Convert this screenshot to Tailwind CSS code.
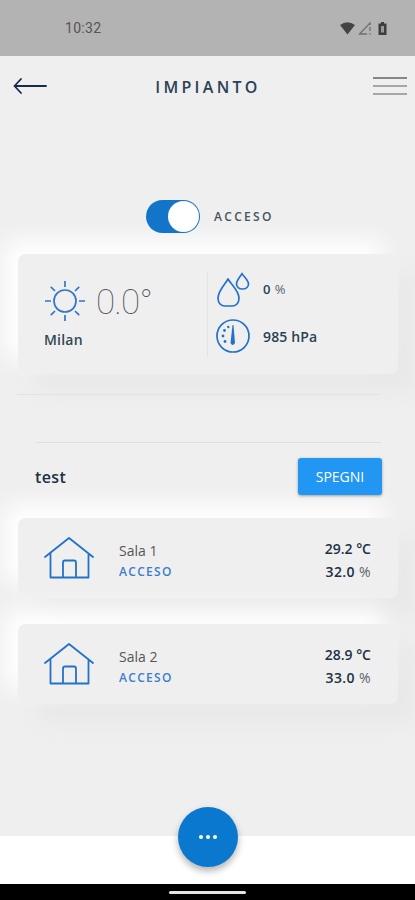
<!DOCTYPE html>
<html lang="it">
<head>
  <meta charset="UTF-8" />
  <meta name="viewport" content="width=device-width, initial-scale=1.0" />
  <title>Impianto</title>
  <script src="https://cdn.jsdelivr.net/npm/@tailwindcss/browser@4"></script>
</head>
<body class="bg-white font-['Open_Sans','Noto_Sans',sans-serif] text-[#1d3145]">
  <div class="relative w-[415px] h-[900px] overflow-hidden flex flex-col">

    <!-- STATUS BAR -->
    <div class="h-14 shrink-0 bg-[#b3b3b3] flex items-center justify-between pl-[65px] pr-[28px] text-[#555]">
      <span class="font-[Roboto] text-sm leading-none tracking-[0.3px]">10:32</span>
      <div class="flex items-center text-[#444]">
        <svg class="w-[15px] h-[13px]" viewBox="0 0 15 13"><path d="M0 3 Q7.5 -2.500 15 3 L7.500 12.500 Z" fill="currentColor"/></svg>
        <svg class="w-[13px] h-[13px] ml-[3px]" viewBox="0 0 13 13" fill="none" stroke="#707070" stroke-width="1.300"><path d="M9 12 H1.500 L12 1 V3"/><path d="M12 5 V9 M12 11 V12.500"/></svg>
        <svg class="w-[9px] h-[13px] ml-[7px]" viewBox="0 0 9 13"><path d="M3 0 H6 V1.500 H8.500 V13 H.5 V1.500 H3 Z" fill="#3e3e3e"/><path d="M3 4 H6 V10.500 H3 Z" fill="#999"/></svg>
      </div>
    </div>

    <main class="h-[780px] shrink-0 bg-[#efefef] flex flex-col">
      <!-- HEADER -->
      <header class="h-[60px] flex items-center justify-between pl-[13px] pr-2">
        <svg class="w-[34px] h-[18px]" viewBox="0 0 34 18" fill="none" stroke="#152b48" stroke-width="1.800" stroke-linecap="round" stroke-linejoin="round"><path d="M33 9 H1.500 M8 2 L1.500 9 L8 16"/></svg>
        <h1 class="text-base font-semibold tracking-[3.300px] leading-none pt-0.5 pr-[4px] text-[#2b4254]">IMPIANTO</h1>
        <div class="w-[34px] flex flex-col gap-[6px]">
          <span class="h-[2px] bg-[#858787]"></span>
          <span class="h-[2px] bg-[#a5a7a7]"></span>
          <span class="h-[2px] bg-[#a5a7a7]"></span>
        </div>
      </header>

      <!-- POWER TOGGLE -->
      <div class="relative z-10 mt-[84px] flex items-center pl-[146px] gap-[14px]">
        <div class="w-[54px] h-[33px] rounded-full bg-[#1375ca] flex items-center justify-end pr-px">
          <span class="size-[31px] rounded-full bg-white"></span>
        </div>
        <span class="text-xs font-semibold tracking-[2.300px] text-[#46545d]">ACCESO</span>
      </div>

      <!-- WEATHER -->
      <section class="relative mt-[21px] ml-[18px] w-[380px] h-[120px] rounded-lg bg-[#efefef] flex shadow-[-14px_-14px_24px_#ffffff,18px_18px_24px_#e8e8e8]">
        <div class="w-[190px] h-[85px] mt-[18px] border-r border-[#e4e4e4] pl-[26px]">
          <div class="flex items-center gap-[10px] h-[58px]">
            <svg class="w-[42px] h-[42px]" viewBox="0 0 42 42" fill="none" stroke="#3176c8" stroke-width="1.700">
              <circle cx="21" cy="21" r="11"/>
              <path d="M21 1 V7 M21 35 V41 M1 21 H7 M35 21 H41 M6.800 6.800 L11 11 M31 31 L35.200 35.200 M6.800 35.200 L11 31 M31 11 L35.200 6.800"/>
            </svg>
            <span class="font-[Roboto] font-thin text-[35px] leading-none text-[#555] tracking-[-0.800px] pt-[3px]">0.0°</span>
          </div>
          <p class="text-[14px] leading-none font-semibold text-[#334854] mt-[3px] tracking-[0.200px]">Milan</p>
        </div>
        <div class="pl-[8px] pt-[16px] text-[13px] font-semibold text-[#2b3f52]">
          <div class="flex items-center gap-[13px] h-[40px]">
            <svg class="w-[34px] h-[36px]" viewBox="0 0 34 36" fill="none" stroke="#2372c9" stroke-width="1.700" stroke-linejoin="round">
              <path d="M12 7 C10 11 2 19 2 26 C2 31 5 34 9 34 H16 C20 34 23 31 23 26 C23 19 14 11 12 7 Z"/>
              <path d="M26 1.500 C25 4 20.500 8 20.500 12 C20.500 15 23 17 26.500 17 C30 17 32.500 15 32.500 12 C32.500 8 27 4 26 1.500 Z"/>
            </svg>
            <span class="tracking-[0.500px]">0 <span class="font-normal text-[#59656d]">%</span></span>
          </div>
          <div class="flex items-center gap-[13px] h-[52px]">
            <svg class="w-[34px] h-[34px]" viewBox="0 0 34 34">
              <circle cx="17" cy="17" r="16" fill="none" stroke="#2372c9" stroke-width="1.700"/>
              <path d="M16.500 6 L14.500 24 Q16.800 28 19 24 L17.500 6 Z" fill="#2372c9"/>
              <g fill="#2372c9"><circle cx="12.300" cy="8" r="1.200"/><circle cx="8.500" cy="11.500" r="1.400"/><circle cx="7" cy="17" r="1.400"/><circle cx="9" cy="22.500" r="1.400"/></g>
            </svg>
            <span class="text-[14px] tracking-[0.150px]">985 hPa</span>
          </div>
        </div>
      </section>

      <div class="relative mt-[20px] ml-[17px] w-[364px] h-px bg-[#e3e3e3]"></div>
      <div class="mt-[47px] ml-[36px] w-[345px] h-px bg-[#dedede]"></div>

      <!-- GROUP -->
      <div class="relative z-10 mt-[15px] pl-[35px] pr-[33px] h-[37px] flex items-center justify-between">
        <h2 class="text-base font-semibold tracking-[0.400px]">test</h2>
        <button class="w-[84px] h-[37px] rounded-[3px] bg-[#2196f3] text-white text-sm font-medium shadow-[0_1px_3px_rgba(0,0,0,0.35)]">SPEGNI</button>
      </div>

      <!-- ROOMS -->
      <div class="mt-[23px] ml-[18px] w-[380px] flex flex-col gap-[26px]">
        <section class="h-[80px] rounded-lg bg-[#efefef] flex items-center pl-[26px] pr-[27px] shadow-[-14px_-14px_24px_#ffffff,18px_18px_24px_#e8e8e8]">
          <svg class="w-[50px] h-[42px]" viewBox="0 0 50 42" fill="none" stroke="#2372c9" stroke-width="1.800" stroke-linecap="round" stroke-linejoin="round">
            <path d="M1 20 L25 1 L49 20 M6.500 16.500 V40.500 H44.500 V16.500 M19 40 V25.500 Q19 23.500 21 23.500 H30 Q32 23.500 32 25.500 V40"/>
          </svg>
          <div class="ml-[25px] mt-[6px]">
            <p class="text-sm leading-[21px] text-[#555]">Sala 1</p>
            <p class="text-xs leading-[21px] font-semibold tracking-[1.300px] text-[#3c7dcc]">ACCESO</p>
          </div>
          <div class="ml-auto mt-[4px] text-right text-[14px] leading-[23px] font-semibold">
            <p>29.2 °C</p>
            <p class="tracking-[0.400px]">32.0 <span class="font-normal text-[#59656d]">%</span></p>
          </div>
        </section>
        <section class="h-[80px] rounded-lg bg-[#efefef] flex items-center pl-[26px] pr-[27px] shadow-[-14px_-14px_24px_#ffffff,18px_18px_24px_#e8e8e8]">
          <svg class="w-[50px] h-[42px]" viewBox="0 0 50 42" fill="none" stroke="#2372c9" stroke-width="1.800" stroke-linecap="round" stroke-linejoin="round">
            <path d="M1 20 L25 1 L49 20 M6.500 16.500 V40.500 H44.500 V16.500 M19 40 V25.500 Q19 23.500 21 23.500 H30 Q32 23.500 32 25.500 V40"/>
          </svg>
          <div class="ml-[25px] mt-[6px]">
            <p class="text-sm leading-[21px] text-[#555]">Sala 2</p>
            <p class="text-xs leading-[21px] font-semibold tracking-[1.300px] text-[#3c7dcc]">ACCESO</p>
          </div>
          <div class="ml-auto mt-[4px] text-right text-[14px] leading-[23px] font-semibold">
            <p>28.9 °C</p>
            <p class="tracking-[0.400px]">33.0 <span class="font-normal text-[#59656d]">%</span></p>
          </div>
        </section>
      </div>
    </main>

    <!-- FLOATING ACTION BUTTON -->
    <button class="absolute left-[178px] top-[807px] size-[60px] rounded-full bg-[#0a78cf] flex items-center justify-center gap-[3px] shadow-[0_4px_7px_rgba(0,0,0,0.3)]">
      <span class="size-[4px] rounded-full bg-white"></span>
      <span class="size-[4px] rounded-full bg-white"></span>
      <span class="size-[4px] rounded-full bg-white"></span>
    </button>

    <!-- GESTURE BAR -->
    <div class="mt-auto h-[16px] shrink-0 bg-black flex justify-center pt-[7px]">
      <span class="w-[77px] h-[3px] rounded-full bg-[#e5e5e5]"></span>
    </div>
  </div>
</body>
</html>
